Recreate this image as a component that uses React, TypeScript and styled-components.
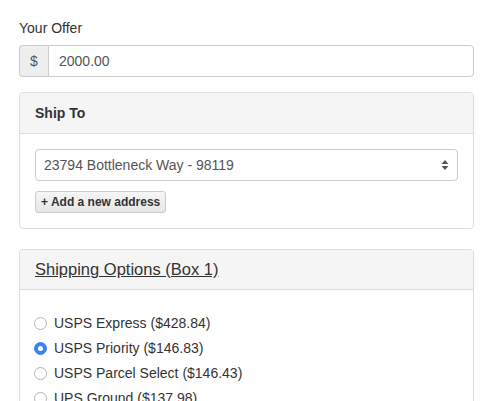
import React from "react";
import styled, { createGlobalStyle } from "styled-components";

const Global = createGlobalStyle`
  html, body { margin: 0; padding: 0; overflow: hidden; background: #fff; }
  body {
    font-family: "Liberation Sans", Arial, Helvetica, sans-serif;
    font-size: 14px;
    line-height: 20px;
    color: #333;
  }
  * { box-sizing: border-box; }
`;

const Page = styled.div`
  padding: 18px 26px 0 19px;
  width: 500px;
`;

const Label = styled.div`
  height: 20px;
  margin-bottom: 7px;
  font-size: 14px;
  color: #333;
`;

const InputGroup = styled.div`
  display: flex;
  height: 32px;
  margin-bottom: 15px;
`;

const Addon = styled.div`
  width: 29px;
  display: flex;
  align-items: center;
  justify-content: center;
  background: #eee;
  border: 1px solid #ccc;
  border-right: none;
  border-radius: 4px 0 0 4px;
  color: #555;
  font-size: 14px;
`;

const TextInput = styled.div`
  flex: 1;
  display: flex;
  align-items: center;
  padding: 0 10px;
  border: 1px solid #ccc;
  border-radius: 0 4px 4px 0;
  color: #555;
  font-size: 14px;
`;

const Panel = styled.div`
  border: 1px solid #ddd;
  border-radius: 4px;
  margin-bottom: 20px;
  overflow: hidden;
`;

const PanelHeading = styled.div<{ $tall?: boolean }>`
  background: #f5f5f5;
  border-bottom: 1px solid #ddd;
  padding: ${(p) => (p.$tall ? "10px 15px 9px" : "10px 15px")};
  min-height: ${(p) => (p.$tall ? "39px" : "41px")};
`;

const HeadingTitle = styled.div`
  font-weight: bold;
  font-size: 14px;
  line-height: 20px;
  color: #333;
`;

const HeadingLink = styled.span`
  font-size: 16.5px;
  line-height: 19px;
  color: #333;
  text-decoration: underline;
`;

const PanelBody = styled.div<{ $top?: number }>`
  padding: ${(p) => p.$top ?? 15}px 15px 15px;
`;

const Select = styled.div`
  height: 32px;
  display: flex;
  align-items: center;
  justify-content: space-between;
  padding: 0 8px 0 8px;
  border: 1px solid #ccc;
  border-radius: 4px;
  background: #fff;
  color: #555;
  font-size: 14px;
  margin-bottom: 10px;
`;

const SmallButton = styled.div`
  display: inline-flex;
  align-items: center;
  height: 22px;
  padding: 0 5px;
  border: 1px solid #ccc;
  border-radius: 3px;
  background: linear-gradient(#f6f6f6, #e6e6e6);
  font-size: 12px;
  font-weight: bold;
  color: #333;
`;

const RadioList = styled.div`
  display: flex;
  flex-direction: column;
  gap: 5px;
`;

const RadioRow = styled.div`
  display: flex;
  align-items: center;
  height: 20px;
  gap: 7px;
  font-size: 14px;
  color: #333;
`;

const RadioDot = styled.span<{ $checked?: boolean }>`
  width: 13px;
  height: 13px;
  border-radius: 50%;
  flex: none;
  margin-left: -1px;
  border: 1px solid ${(p) => (p.$checked ? "#3a82f7" : "#b5b5b5")};
  background: ${(p) => (p.$checked ? "#3a82f7" : "#fff")};
  display: flex;
  align-items: center;
  justify-content: center;
  &::after {
    content: "";
    display: ${(p) => (p.$checked ? "block" : "none")};
    width: 5px;
    height: 5px;
    border-radius: 50%;
    background: #fff;
  }
`;

const Arrows = () => (
  <svg width="8" height="12" viewBox="0 0 8 12">
    <path d="M4 1 L7.5 5 L0.5 5 Z" fill="#555" />
    <path d="M4 11 L7.5 7 L0.5 7 Z" fill="#555" />
  </svg>
);

const options = [
  { label: "USPS Express ($428.84)", checked: false },
  { label: "USPS Priority ($146.83)", checked: true },
  { label: "USPS Parcel Select ($146.43)", checked: false },
  { label: "UPS Ground ($137.98)", checked: false },
];

export default function App() {
  return (
    <>
      <Global />
      <Page>
        <Label>Your Offer</Label>
        <InputGroup>
          <Addon>$</Addon>
          <TextInput>2000.00</TextInput>
        </InputGroup>
        <Panel>
          <PanelHeading>
            <HeadingTitle>Ship To</HeadingTitle>
          </PanelHeading>
          <PanelBody>
            <Select>
              <span>23794 Bottleneck Way - 98119</span>
              <Arrows />
            </Select>
            <SmallButton>+ Add a new address</SmallButton>
          </PanelBody>
        </Panel>
        <Panel>
          <PanelHeading $tall>
            <HeadingLink>Shipping Options (Box 1)</HeadingLink>
          </PanelHeading>
          <PanelBody $top={23}>
            <RadioList>
              {options.map((o) => (
                <RadioRow key={o.label}>
                  <RadioDot $checked={o.checked} />
                  <span>{o.label}</span>
                </RadioRow>
              ))}
            </RadioList>
          </PanelBody>
        </Panel>
      </Page>
    </>
  );
}
